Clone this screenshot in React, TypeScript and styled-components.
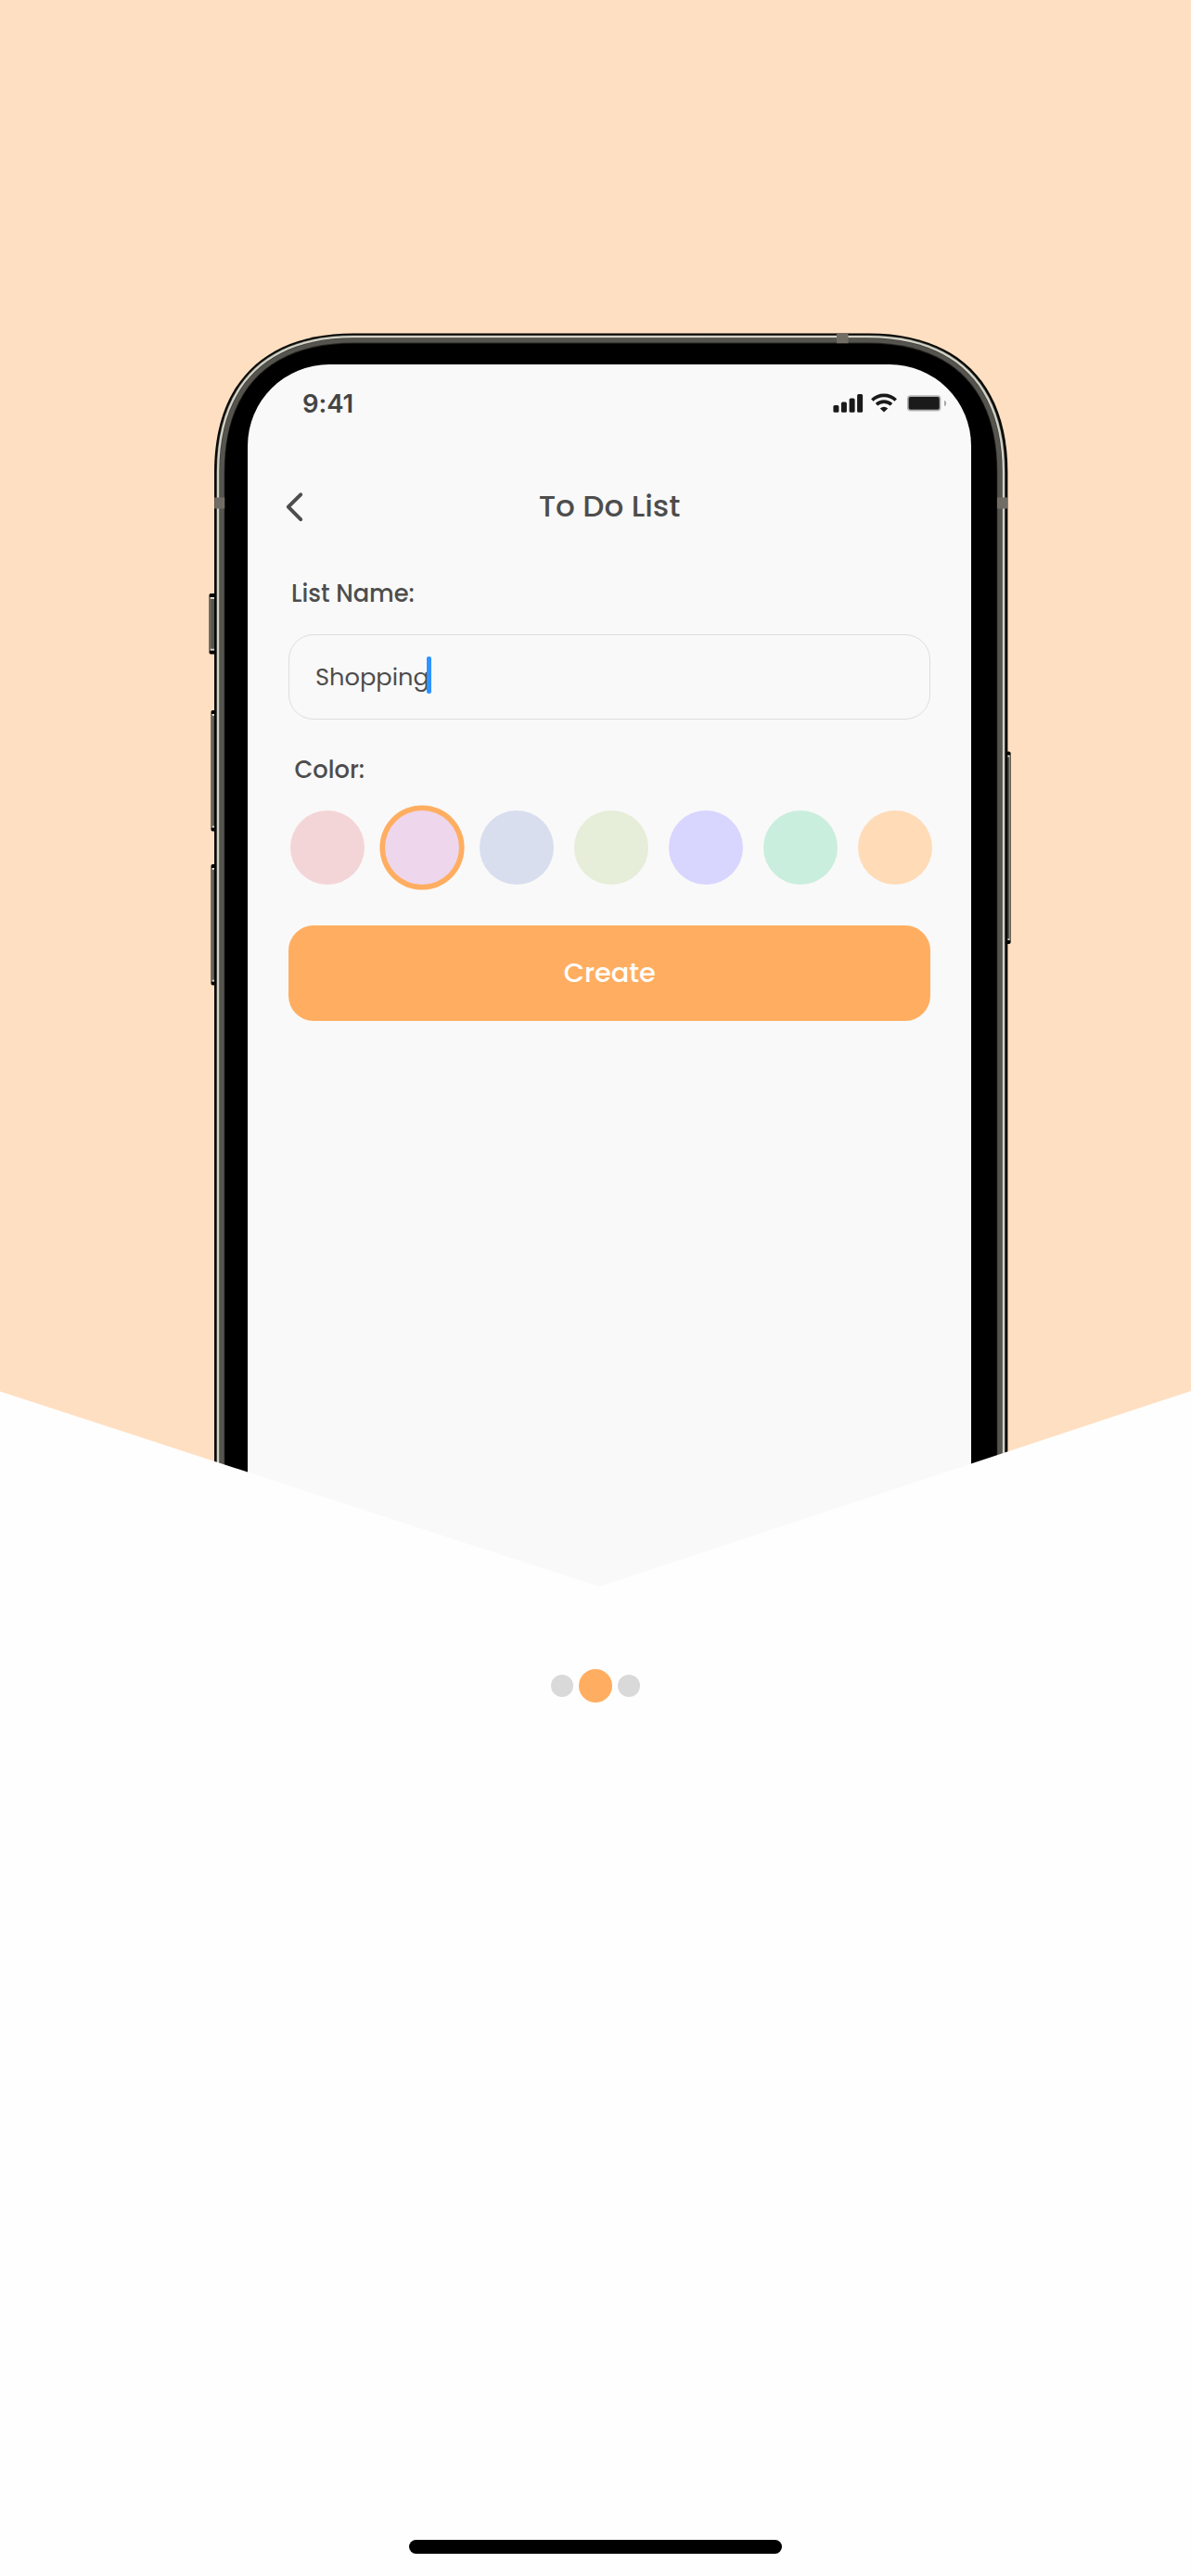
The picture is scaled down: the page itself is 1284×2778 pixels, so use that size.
import React from "react";
import styled, { createGlobalStyle } from "styled-components";

const GlobalStyle = createGlobalStyle`
  body { margin: 0; background: #fefefe; }
  * { box-sizing: border-box; }
`;

const Page = styled.main`
  width: 1284px;
  height: 2778px;
  display: flex;
  flex-direction: column;
  align-items: center;
  background: #fefefe;
  color: #4d4d4d;
  font-family: Poppins, Inter, "Liberation Sans", sans-serif;
  overflow: hidden;
`;

const Hero = styled.section`
  width: 1284px;
  height: 1711px;
  flex: none;
  padding: 393px 0 0 267px;
  background: #ffdfc1;
  position: relative;
`;

const Frame = styled.svg`
  position: absolute;
  inset: 0;
`;

const Screen = styled.div`
  position: relative;
  width: 780px;
  height: 1318px;
  padding: 0 44px;
  border-radius: 88px 88px 0 0;
  background: #f9f9f9;
  display: flex;
  flex-direction: column;
`;

const Chevron = styled.svg`
  position: absolute;
  left: 0;
  bottom: -2px;
  display: block;
`;

const StatusBar = styled.header`
  height: 84px;
  margin: 0 -18px 0 15px;
  display: flex;
  justify-content: space-between;
  align-items: center;
`;

const Clock = styled.span`
  font-family: Inter, sans-serif;
  font-size: 27.5px;
  font-weight: 600;
  line-height: 84px;
  letter-spacing: -0.1px;
  color: #444;
`;

const TitleBar = styled.div`
  height: 64px;
  margin-top: 38px;
  display: grid;
  grid-template-columns: 40px 1fr 40px;
  align-items: center;
`;

const BackButton = styled.button`
  margin-left: -6px;
  padding: 0;
  border: 0;
  background: none;
  display: flex;
`;

const Title = styled.h1`
  margin: 0;
  padding-bottom: 3px;
  text-align: center;
  font-size: 32.6px;
  font-weight: 500;
  line-height: 61px;
`;

const Label = styled.label<{ $top: number; $left: number }>`
  margin: ${(p) => p.$top}px 0 0 ${(p) => p.$left}px;
  height: 40px;
  font-size: 25.7px;
  font-weight: 500;
  line-height: 40px;
`;

const Field = styled.div`
  height: 92px;
  margin-top: 24px;
  padding-left: 28px;
  display: flex;
  align-items: center;
  border: 1px solid #dedede;
  border-radius: 27px;
`;

const FieldText = styled.span`
  font-size: 25.7px;
  font-weight: 400;
  line-height: 40px;
`;

const Caret = styled.i`
  width: 5.6px;
  height: 40px;
  margin: -4px 0 0 -3px;
  border-radius: 2px;
  background: #2f94ff;
`;

const Swatches = styled.div`
  display: flex;
  gap: 21.8px;
  margin: 24px -4px 0 1.6px;
`;

const Swatch = styled.span<{ $color: string; $selected: boolean }>`
  width: 80.25px;
  height: 80.25px;
  flex: none;
  border-radius: 50%;
  background: ${(p) => p.$color};
  box-shadow: ${(p) => (p.$selected ? "0 0 0 5.6px #ffae61" : "none")};
`;

const CreateButton = styled.button`
  height: 103.3px;
  margin: 43.75px -0.4px 0 0;
  padding: 0;
  border: 0;
  border-radius: 27px;
  background: #ffae61;
  color: #fff;
  font: inherit;
  font-size: 28.8px;
  font-weight: 500;
`;

const Pager = styled.nav`
  height: 36px;
  margin-top: 89px;
  display: flex;
  align-items: center;
  gap: 6px;
`;

const Dot = styled.span<{ $active?: boolean }>`
  width: ${(p) => (p.$active ? 36 : 24)}px;
  height: ${(p) => (p.$active ? 36 : 24)}px;
  border-radius: 50%;
  background: ${(p) => (p.$active ? "#ffae61" : "#d9d9d9")};
`;

const HomeIndicator = styled.div`
  width: 402px;
  height: 15px;
  margin: auto 0 24px;
  border-radius: 8px;
  background: #000;
`;

const COLORS = ["#f4d5d7", "#eed6ec", "#d8deee", "#e6edd8", "#d8d5ff", "#caeedd", "#ffdbb7"];

// Open-bottomed body outline with softened corners, given its left, top and right edges.
const outline = (l: number, t: number, r: number) => {
  const d = l - 231;
  const e = 150 - d;
  const h = (4 * e - 8 * 0.293 * (133 - d)) / 3;
  return `M${l} 1711V${t + e}C${l} ${t + e - h} ${l + e - h} ${t} ${l + e} ${t}H${r - e}C${r - e + h} ${t} ${r} ${t + e - h} ${r} ${t + e}V1711Z`;
};

const SideKey = ({ x, y, w, h, right }: { x: number; y: number; w: number; h: number; right?: boolean }) => (
  <g>
    <rect x={right ? x - 2 : x} y={y} width={w + 2} height={h} rx={1.8} fill="#050504" />
    <rect x={right ? x : x + 1.3} y={y + 4} width={w - 1.3} height={h - 8} fill="#55554e" />
    <rect x={right ? x + w - 1.6 : x + 0.8} y={y + 4} width={1} height={h - 8} fill="#898980" />
    <rect x={right ? x + 0.3 : x + 1.3} y={y + 4} width={w - 1.6} height={1.8} fill="#e8e8df" />
    <rect x={right ? x + 0.3 : x + 1.3} y={y + h - 5.8} width={w - 1.6} height={1.8} fill="#d8d8cf" />
  </g>
);

const PhoneFrame = () => (
  <Frame width="1284" height="1711" viewBox="0 0 1284 1711" aria-hidden="true">
    <SideKey x={225.5} y={640} w={6} h={65.5} />
    <SideKey x={227.5} y={766} w={4} h={130.5} />
    <SideKey x={227.5} y={932} w={4} h={130.5} />
    <SideKey x={1085.6} y={810.5} w={4} h={207.5} right />
    <path d={outline(231, 359.4, 1086.4)} fill="#080907" />
    <path d={outline(233.3, 361.3, 1083.8)} fill="#44453f" />
    <path d={outline(233.9, 361.9, 1083.1)} fill="#d3d2c6" />
    <path d={outline(236.3, 364.3, 1080.7)} fill="#3d3c38" />
    <path d={outline(237.1, 365, 1080)} fill="#55544e" />
    <path d={outline(241.7, 369.6, 1075.3)} fill="#252421" />
    <path d={outline(242.4, 370.4, 1074.6)} fill="#000" />
    <g fill="#716c64">
      <rect x="231.2" y="536.5" width="11" height="12" />
      <rect x="1075" y="536.5" width="11.2" height="12" />
      <rect x="902" y="359.6" width="12.5" height="10.6" />
    </g>
  </Frame>
);

const StatusIcons = () => (
  <svg width="124" height="24" viewBox="897 423 124 24" fill="#1a1a1a">
    <rect x="898.4" y="437" width="6" height="7.8" rx="1.6" />
    <rect x="906.9" y="433.6" width="6" height="11.2" rx="1.6" />
    <rect x="915.6" y="429.4" width="6" height="15.4" rx="1.6" />
    <rect x="924.1" y="425" width="6" height="19.8" rx="1.6" />
    <g fill="none" stroke="#1a1a1a" strokeWidth="3.6">
      <path d="M940.3 431.5a18.2 18.2 0 0 1 25.4 0" />
      <path d="M945 436.3a11.6 11.6 0 0 1 16 0" />
    </g>
    <path d="M948.8 440.4a6 6 0 0 1 8.4 0L953 444.6Z" />
    <rect x="978.9" y="427.2" width="34.5" height="15.4" rx="2.8" fill="none" stroke="#b2b2b2" strokeWidth="1.9" />
    <rect x="979.6" y="428" width="33.2" height="13.7" rx="2" />
    <path d="M1018 431.8q2.2 1 2.2 3.2t-2.2 3.2Z" fill="#a6a6a6" />
  </svg>
);

export default function App() {
  return (
    <>
      <GlobalStyle />
      <Page>
        <Hero>
          <PhoneFrame />
          <Screen>
            <StatusBar>
              <Clock>9:41</Clock>
              <StatusIcons />
            </StatusBar>
            <TitleBar>
              <BackButton aria-label="Back">
                <svg width="28" height="36" viewBox="305 529 28 36" fill="none">
                  <path d="M324.2 533.3L310.8 546.7L324.2 560.1" stroke="#4d4d4d" strokeWidth="4" strokeLinecap="round" strokeLinejoin="round" />
                </svg>
              </BackButton>
              <Title>To Do List</Title>
            </TitleBar>
            <Label $top={41} $left={3}>List Name:</Label>
            <Field>
              <FieldText>Shopping</FieldText>
              <Caret />
            </Field>
            <Label $top={34} $left={6.5}>Color:</Label>
            <Swatches>
              {COLORS.map((color, i) => (
                <Swatch key={color} $color={color} $selected={i === 1} />
              ))}
            </Swatches>
            <CreateButton>Create</CreateButton>
          </Screen>
          <Chevron width="1284" height="213" viewBox="0 1500 1284 213" aria-hidden="true">
            <path d="M0 1500.5L646 1711L1284 1500V1713H0Z" fill="#fefefe" />
          </Chevron>
        </Hero>
        <Pager>
          <Dot />
          <Dot $active />
          <Dot />
        </Pager>
        <HomeIndicator />
      </Page>
    </>
  );
}
